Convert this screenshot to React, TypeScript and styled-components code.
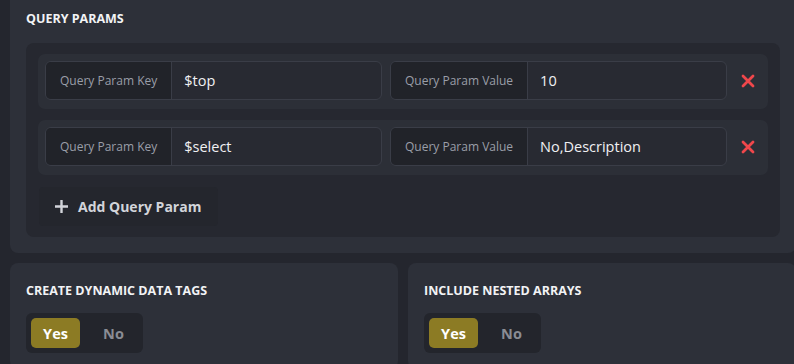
import React, { useState } from "react";
import styled, { createGlobalStyle } from "styled-components";

const GlobalStyle = createGlobalStyle`
  html, body {
    margin: 0;
    padding: 0;
    background: #24262e;
    overflow: hidden;
  }
  body {
    font-family: "Open Sans", "Noto Sans", sans-serif;
  }
`;

const Page = styled.div`
  width: 786px;
  padding-left: 10px;
  display: flex;
  flex-direction: column;
  gap: 10px;
`;

const Panel = styled.section<{ $flatTop?: boolean }>`
  background: #2d3039;
  border-radius: ${(p) => (p.$flatTop ? "0 0 8px 8px" : "8px")};
  padding: ${(p) => (p.$flatTop ? "9px 16px 16px" : "18px 16px 16px")};
`;

const Title = styled.h3<{ $flush?: boolean }>`
  margin: ${(p) => (p.$flush ? "0" : "0 0 12px")};
  font-size: 12.5px;
  line-height: 20px;
  font-weight: 700;
  color: #f2f3f5;
  text-transform: uppercase;
`;

const ParamsBox = styled.div`
  margin-top: 14px;
  background: #262830;
  border-radius: 8px;
  padding: 11px 12px;
  display: flex;
  flex-direction: column;
  gap: 11px;
`;

const ParamRow = styled.div`
  background: #2c2f37;
  border-radius: 7px;
  padding: 7px 7px 9px;
  display: flex;
  align-items: center;
  gap: 8px;
`;

const InputGroup = styled.div`
  flex: 1;
  display: flex;
  height: 39px;
  box-sizing: border-box;
  border: 1px solid #3a3d47;
  border-radius: 6px;
  overflow: hidden;
  background: #282a32;
`;

const GroupLabel = styled.span`
  display: flex;
  align-items: center;
  padding: 0 14px;
  background: #212329;
  border-right: 1px solid #3a3d47;
  font-size: 12px;
  color: #9a9ea8;
  white-space: nowrap;
`;

const GroupInput = styled.input`
  flex: 1;
  min-width: 0;
  border: none;
  outline: none;
  background: transparent;
  padding: 0 12px;
  font-family: "Open Sans", "Noto Sans", sans-serif;
  font-size: 14.5px;
  color: #f0f0f2;
`;

const DeleteButton = styled.button`
  width: 26px;
  height: 26px;
  border: none;
  background: transparent;
  padding: 0;
  display: flex;
  align-items: center;
  justify-content: center;
  cursor: pointer;
`;

const AddButton = styled.button`
  align-self: flex-start;
  margin: 1px 0 0 1px;
  height: 39px;
  display: flex;
  align-items: center;
  gap: 10px;
  padding: 0 17px 0 16px;
  border: none;
  border-radius: 4px;
  background: #24262d;
  font-family: "Open Sans", "Noto Sans", sans-serif;
  font-size: 14px;
  font-weight: 700;
  color: #d2d4da;
  cursor: pointer;
`;

const Columns = styled.div`
  display: grid;
  grid-template-columns: 1fr 1fr;
  gap: 10px;
`;

const Toggle = styled.div`
  display: inline-flex;
  gap: 9px;
  padding: 5px;
  border-radius: 6px;
  background: #23252c;
`;

const ToggleOption = styled.button<{ $active: boolean }>`
  width: 49px;
  height: 30px;
  border: none;
  border-radius: 5px;
  background: ${(p) => (p.$active ? "#8c7b24" : "transparent")};
  color: ${(p) => (p.$active ? "#ffffff" : "#8a8c94")};
  font-family: "Open Sans", "Noto Sans", sans-serif;
  font-size: 14.5px;
  font-weight: 700;
  cursor: pointer;
`;

const CrossIcon = () => (
  <svg width="14" height="14" viewBox="0 0 14 14">
    <path
      d="M2 2 L12 12 M12 2 L2 12"
      stroke="#f0474b"
      strokeWidth="2.8"
      strokeLinecap="round"
    />
  </svg>
);

const PlusIcon = () => (
  <svg width="13" height="13" viewBox="0 0 13 13">
    <path
      d="M6.5 0.5 V12.5 M0.5 6.5 H12.5"
      stroke="#d2d4da"
      strokeWidth="2.4"
      strokeLinecap="round"
    />
  </svg>
);

interface Param {
  key: string;
  value: string;
}

const YesNo: React.FC<{ initial?: boolean }> = ({ initial = true }) => {
  const [yes, setYes] = useState(initial);
  return (
    <Toggle>
      <ToggleOption $active={yes} onClick={() => setYes(true)}>
        Yes
      </ToggleOption>
      <ToggleOption $active={!yes} onClick={() => setYes(false)}>
        No
      </ToggleOption>
    </Toggle>
  );
};

export default function App() {
  const [params, setParams] = useState<Param[]>([
    { key: "$top", value: "10" },
    { key: "$select", value: "No,Description" },
  ]);

  const update = (i: number, field: keyof Param, v: string) => {
    setParams((ps) => ps.map((p, idx) => (idx === i ? { ...p, [field]: v } : p)));
  };

  return (
    <>
      <GlobalStyle />
      <Page>
        <Panel $flatTop>
          <Title $flush>Query Params</Title>
          <ParamsBox>
            {params.map((p, i) => (
              <ParamRow key={i}>
                <InputGroup>
                  <GroupLabel>Query Param Key</GroupLabel>
                  <GroupInput
                    value={p.key}
                    onChange={(e) => update(i, "key", e.target.value)}
                  />
                </InputGroup>
                <InputGroup>
                  <GroupLabel>Query Param Value</GroupLabel>
                  <GroupInput
                    value={p.value}
                    onChange={(e) => update(i, "value", e.target.value)}
                  />
                </InputGroup>
                <DeleteButton
                  onClick={() => setParams((ps) => ps.filter((_, idx) => idx !== i))}
                >
                  <CrossIcon />
                </DeleteButton>
              </ParamRow>
            ))}
            <AddButton
              onClick={() => setParams((ps) => [...ps, { key: "", value: "" }])}
            >
              <PlusIcon />
              Add Query Param
            </AddButton>
          </ParamsBox>
        </Panel>
        <Columns>
          <Panel>
            <Title>Create Dynamic Data Tags</Title>
            <YesNo />
          </Panel>
          <Panel>
            <Title>Include Nested Arrays</Title>
            <YesNo />
          </Panel>
        </Columns>
      </Page>
    </>
  );
}
